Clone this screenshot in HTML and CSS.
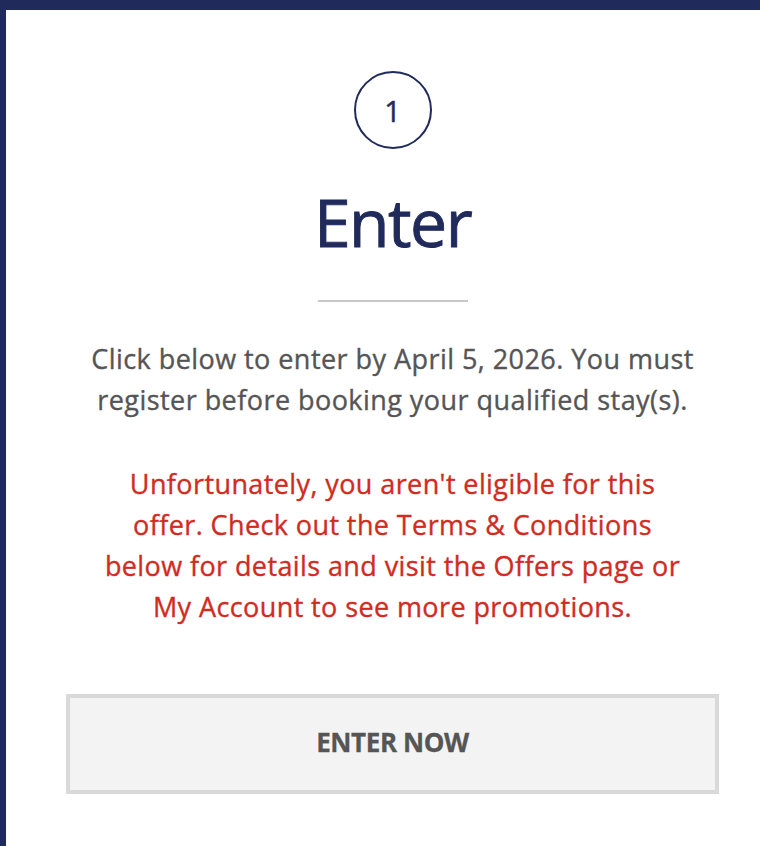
FILE: index.html
```html
<!DOCTYPE html>
<html lang="en">
<head>
<meta charset="utf-8">
<link rel="stylesheet" href="styles.css">
</head>
<body>
<div class="card">
  <div class="step">1</div>
  <h1 class="title">Enter</h1>
  <div class="divider"></div>
  <p class="intro">Click below to enter by April 5, 2026. You must<br>register before booking your qualified stay(s).</p>
  <p class="error">Unfortunately, you aren't eligible for this<br>offer. Check out the Terms &amp; Conditions<br>below for details and visit the Offers page or<br>My Account to see more promotions.</p>
  <button class="cta">ENTER NOW</button>
</div>
</body>
</html>
```
FILE: styles.css
```css
html, body {
  margin: 0;
  padding: 0;
  background: #fff;
  overflow: hidden;
}
.card {
  box-sizing: border-box;
  min-height: 846px;
  border-top: 10px solid #202a5b;
  border-left: 6px solid #202a5b;
  padding: 61px 41px 0 60px;
  display: flex;
  flex-direction: column;
  align-items: center;
  font-family: "Open Sans", "Noto Sans", sans-serif;
  text-align: center;
}
.step {
  box-sizing: border-box;
  width: 78px;
  height: 78px;
  border: 2px solid #202a5b;
  border-radius: 50%;
  display: flex;
  align-items: center;
  justify-content: center;
  color: #202a5b;
  font-size: 29px;
  -webkit-text-stroke: 0.5px #202a5b;
}
.title {
  margin: 32px 0 0;
  font-size: 66px;
  font-weight: 400;
  line-height: 80px;
  color: #202a5b;
  letter-spacing: -1.5px;
  -webkit-text-stroke: 0.9px #202a5b;
}
.divider {
  width: 150px;
  height: 2px;
  background: #c8c8c8;
  margin-top: 39px;
}
.intro {
  margin: 36px 0 0;
  font-size: 27px;
  line-height: 41px;
  color: #555;
  white-space: nowrap;
  letter-spacing: 0.45px;
  -webkit-text-stroke: 0.35px #555;
}
.error {
  margin: 43px 0 0;
  font-size: 27px;
  line-height: 41px;
  color: #d12b1f;
  white-space: nowrap;
  letter-spacing: 0.4px;
  -webkit-text-stroke: 0.35px #d12b1f;
}
.cta {
  box-sizing: border-box;
  margin-top: 67px;
  width: 653px;
  height: 100px;
  padding: 0 0 5px;
  background: #f3f3f3;
  border: 4px solid #d9d9d9;
  font-family: "Open Sans", "Noto Sans", sans-serif;
  font-size: 26px;
  font-weight: 700;
  color: #555;
  letter-spacing: -0.4px;
  -webkit-text-stroke: 0.3px #555;
}
```
